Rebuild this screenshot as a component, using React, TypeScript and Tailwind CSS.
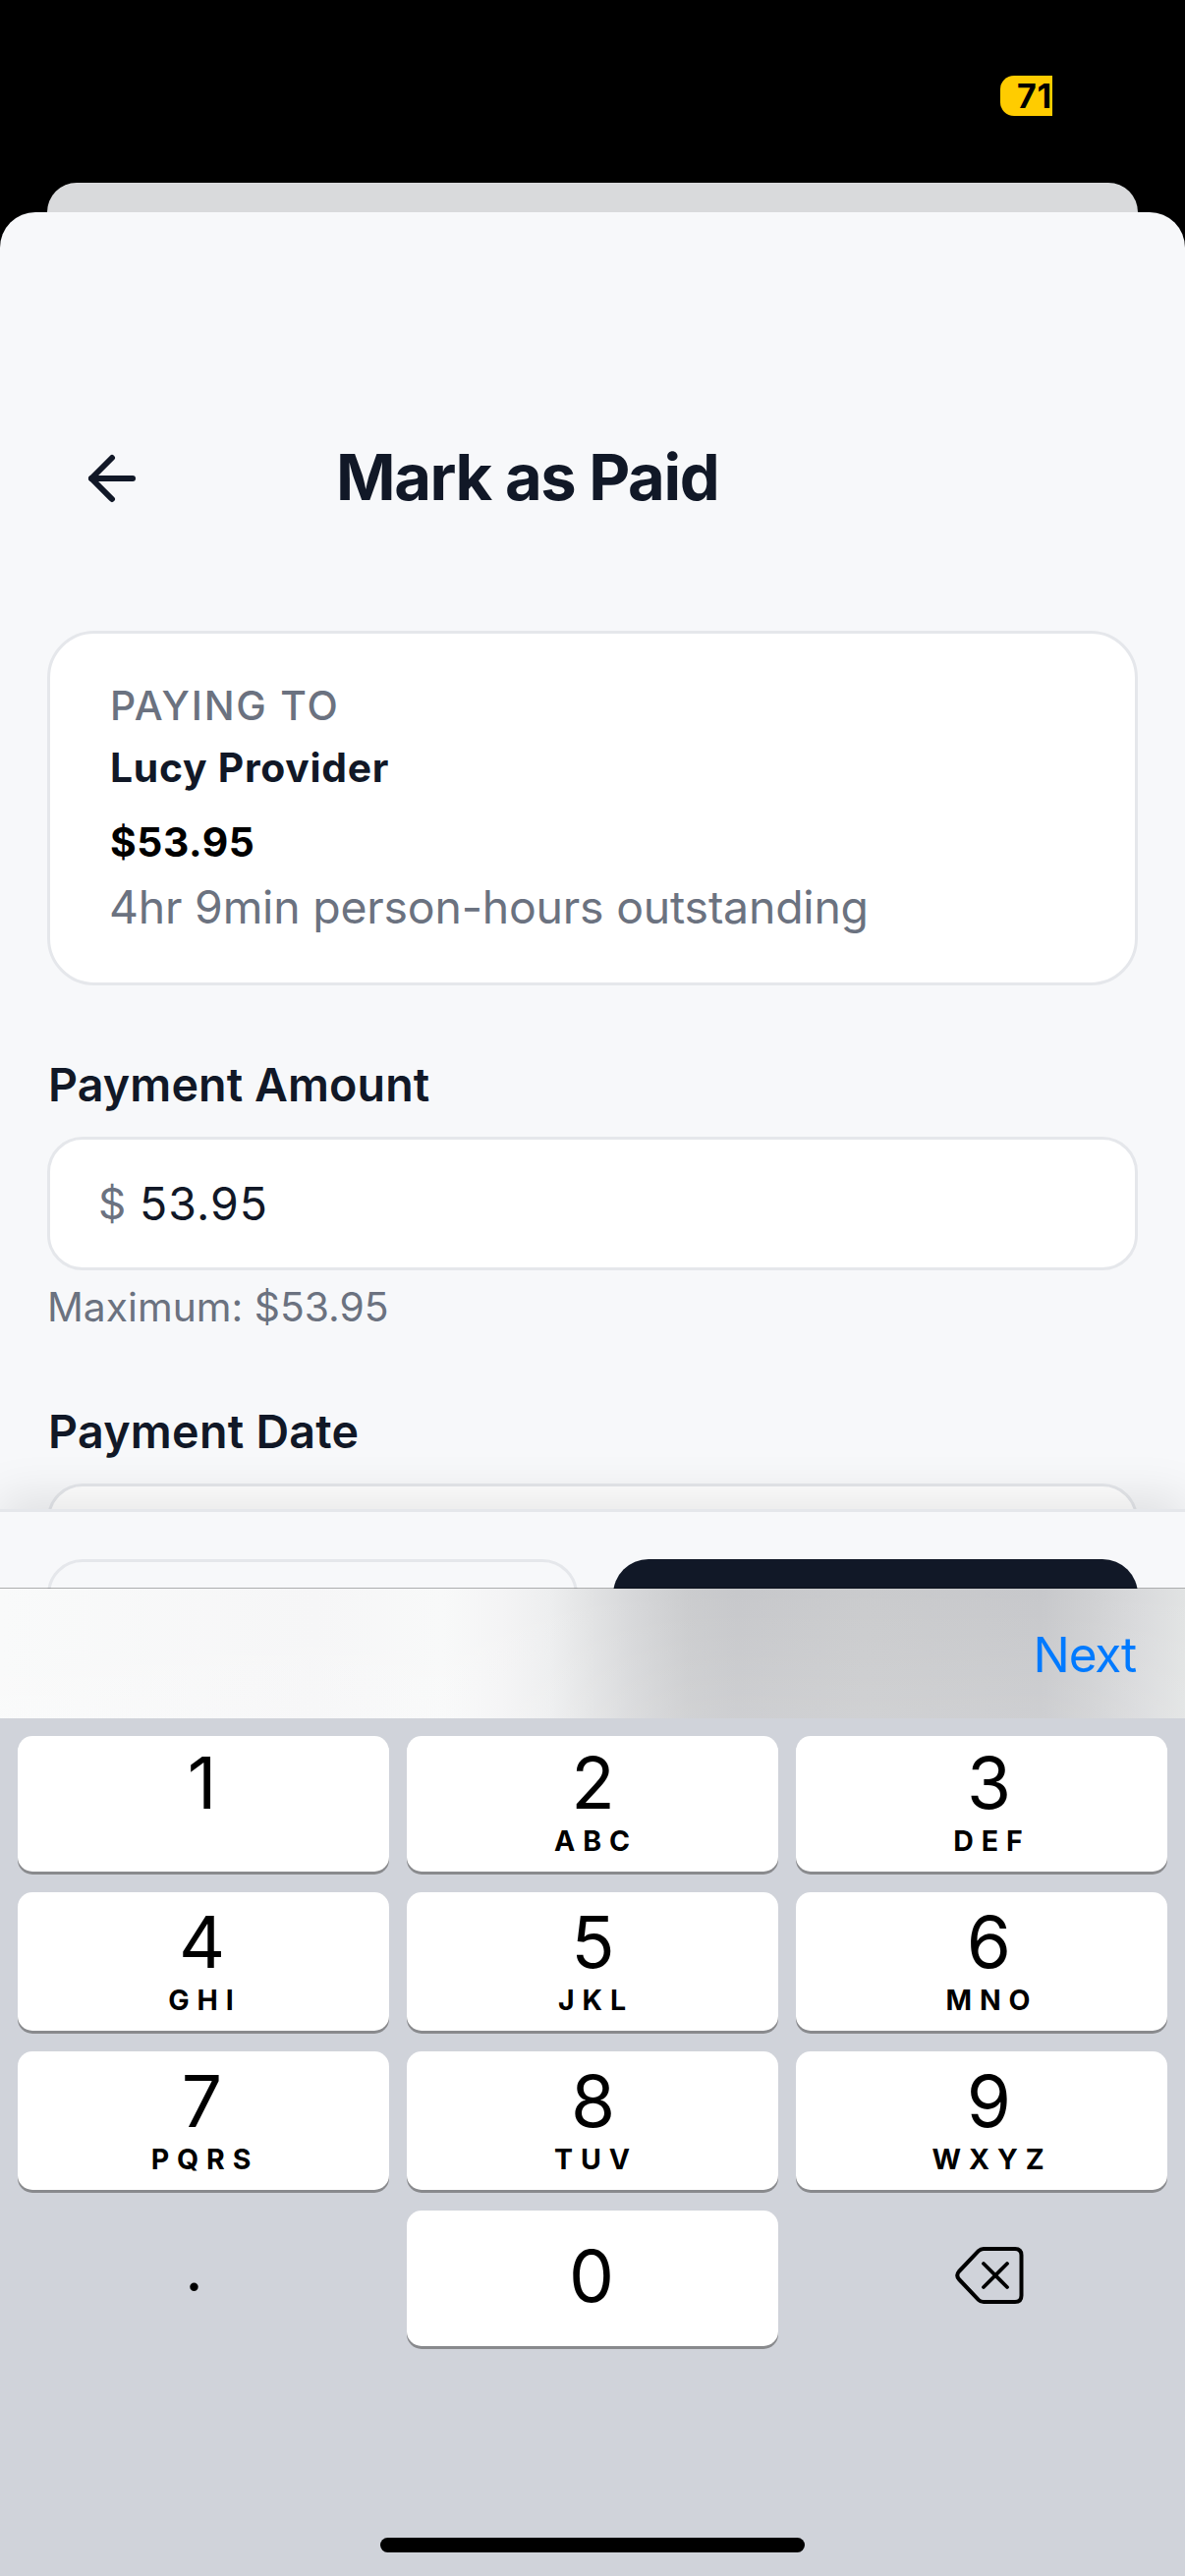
import React from "react";

type KeyDef = { digit: string; letters?: string };

const rows: KeyDef[][] = [
  [{ digit: "1" }, { digit: "2", letters: "ABC" }, { digit: "3", letters: "DEF" }],
  [{ digit: "4", letters: "GHI" }, { digit: "5", letters: "JKL" }, { digit: "6", letters: "MNO" }],
  [{ digit: "7", letters: "PQRS" }, { digit: "8", letters: "TUV" }, { digit: "9", letters: "WXYZ" }],
];

// Horizontal nudge of the label inside each keypad column.
const columnShift = ["pr-[3px]", "pl-px", "pl-[15px]"];

function StatusBar() {
  return (
    <div className="flex h-[186px] justify-end bg-black pt-[77px] pr-[135px]">
      <div className="h-[41px] w-[53px] rounded-l-[14px] bg-[#ffcc00] pl-[17px] text-[34px] leading-[41px] font-bold tracking-[0.8px] whitespace-nowrap text-black">
        71
      </div>
    </div>
  );
}

function Header() {
  return (
    <header className="flex h-[72px] items-center pl-[78px]">
      <svg
        viewBox="0 0 24 24"
        className="size-[72px] flex-none"
        fill="none"
        stroke="#111827"
        strokeWidth="2"
        strokeLinecap="round"
        strokeLinejoin="round"
      >
        <path d="m12 19-7-7 7-7" />
        <path d="M19 12H5" />
      </svg>
      <h1 className="mb-[2px] ml-[192px] text-[65px] leading-[70px] font-bold tracking-[-1.4px] whitespace-nowrap">
        Mark as Paid
      </h1>
    </header>
  );
}

function PayeeCard() {
  return (
    <section className="mt-[119px] h-[361px] rounded-[48px] border-[3px] border-[#e5e7eb] bg-white pt-[43px] pl-[60px] leading-[60px] whitespace-nowrap">
      <p className="pl-px text-[40.8px] font-[450] tracking-[1.8px] text-[#6b7280]">PAYING TO</p>
      <p className="mt-[3px] pl-px text-[40.8px] font-bold tracking-[0.75px]">Lucy Provider</p>
      <p className="mt-[16px] pl-px text-[40.8px] font-bold tracking-[0.6px] text-black">$53.95</p>
      <p className="mt-[6px] text-[46.4px] tracking-[-0.2px] text-[#6b7280]">
        4hr 9min person-hours outstanding
      </p>
    </section>
  );
}

function Keypad() {
  return (
    <div className="flex flex-1 flex-col bg-[#d0d3da] px-[18px] pt-[18px] text-black">
      <div className="flex flex-col gap-[21px]">
        {rows.map((row, r) => (
          <div key={r} className="flex gap-[18px]">
            {row.map((k, c) => (
              <div
                key={k.digit}
                className={`flex w-[378px] flex-col items-center rounded-[15px] bg-white shadow-[0_3px_0_#898a8d] ${columnShift[c]} ${
                  r === 0 ? "h-[138px] pt-[8px]" : "h-[141px] pt-[11px]"
                }`}
              >
                <span className="text-[73px] leading-[80px]">{k.digit}</span>
                {k.letters && (
                  <span className="mt-[3px] pl-[6px] text-[28.5px] leading-[32px] font-bold tracking-[7.9px]">
                    {k.letters}
                  </span>
                )}
              </div>
            ))}
          </div>
        ))}
        <div className="flex h-[138px] gap-[18px]">
          <div className="flex w-[378px] justify-center pt-[19px] pr-[19px] text-[64px] leading-[80px]">
            <span>.</span>
          </div>
          <div className="w-[378px] rounded-[15px] bg-white pt-[27px] pr-[2px] text-center text-[73px] leading-[80px] shadow-[0_3px_0_#898a8d]">
            0
          </div>
          <div className="flex w-[378px] justify-center pt-[35px] pl-[15px]">
            <svg
              viewBox="0 0 72 62"
              className="h-[62px] w-[72px]"
              fill="none"
              stroke="#000"
              strokeWidth="4"
              strokeLinecap="round"
              strokeLinejoin="round"
            >
              <path d="M30 4H62Q68.500 4 68.500 10.500V51.500Q68.500 58 62 58H30Q27 58 24.800 55.800L5 35Q1.500 31 5 27L24.800 6.200Q27 4 30 4Z" />
              <path d="M30 19 54 43M54 19 30 43" strokeWidth="3.800" />
            </svg>
          </div>
        </div>
      </div>
      <div className="mx-auto mt-auto mb-[24px] h-[15px] w-[432px] rounded-full bg-black" />
    </div>
  );
}

export default function App() {
  return (
    <div className="flex h-[2622px] w-[1206px] flex-col overflow-hidden bg-black font-['Inter',sans-serif] text-[#111827]">
      <StatusBar />
      <div className="mx-[48px] h-[30px] flex-none rounded-t-[32px] bg-[#d9dadc]" />
      <div className="flex h-[1401px] flex-none flex-col overflow-hidden rounded-t-[36px] bg-[#f7f8fa]">
        <div className="h-[1320px] overflow-hidden pt-[235px]">
          <Header />
          <div className="px-[48px]">
            <PayeeCard />
            <h2 className="mt-[71px] pl-px text-[46.6px] leading-[60px] font-semibold tracking-[0.1px]">Payment Amount</h2>
            <div className="mt-[23px] flex h-[136px] items-center rounded-[36px] border-[3px] border-[#e5e7eb] bg-white pl-[49px] text-[46.4px] leading-[60px]">
              <span className="w-[42px] text-[44px] text-[#6b7280]">$</span>
              <span className="tracking-[1.04px]">53.95</span>
            </div>
            <p className="mt-[7px] text-[40.8px] leading-[60px] text-[#6b7280]">Maximum: $53.95</p>
            <h2 className="mt-[67px] pl-px text-[46.6px] leading-[60px] font-semibold tracking-[0.27px]">Payment Date</h2>
            <div className="mt-[23px] h-[136px] rounded-[36px] border-[3px] border-[#e5e7eb] bg-white" />
          </div>
        </div>
        <footer className="relative z-10 flex h-[81px] flex-none items-start gap-[36px] border-t-[3px] border-[#e5e7eb] bg-[#f7f8fa] px-[48px] pt-[48px] shadow-[0_-12px_48px_rgba(0,0,0,0.1)]">
          <div className="h-[150px] w-[540px] rounded-[36px] border-[3px] border-[#e5e7eb]" />
          <div className="h-[150px] w-[534px] rounded-[36px] bg-[#111827]" />
        </footer>
      </div>
      <div className="relative z-20 -mt-px h-px flex-none bg-black/30" />
      <div className="flex h-[132px] flex-none items-center justify-end bg-[linear-gradient(to_bottom,rgba(255,255,255,0),rgba(255,255,255,0.12)),linear-gradient(to_right,#f9fafa_0,#f6f6f7_320px,#f8f9f9_450px,#f4f4f5_510px,#edeeef_560px,#e2e3e4_600px,#d6d7d9_645px,#cbccce_700px,#c7c8cb_750px,#cacbcd_880px,#c7c8cb_1060px,#cfd0d2_1110px,#d9dadc_1160px,#e1e3e3_1206px)] pr-[50px] pt-[2px]">
        <span className="text-[49.5px] leading-[60px] tracking-[-1.2px] text-[#007aff]">Next</span>
      </div>
      <Keypad />
    </div>
  );
}
